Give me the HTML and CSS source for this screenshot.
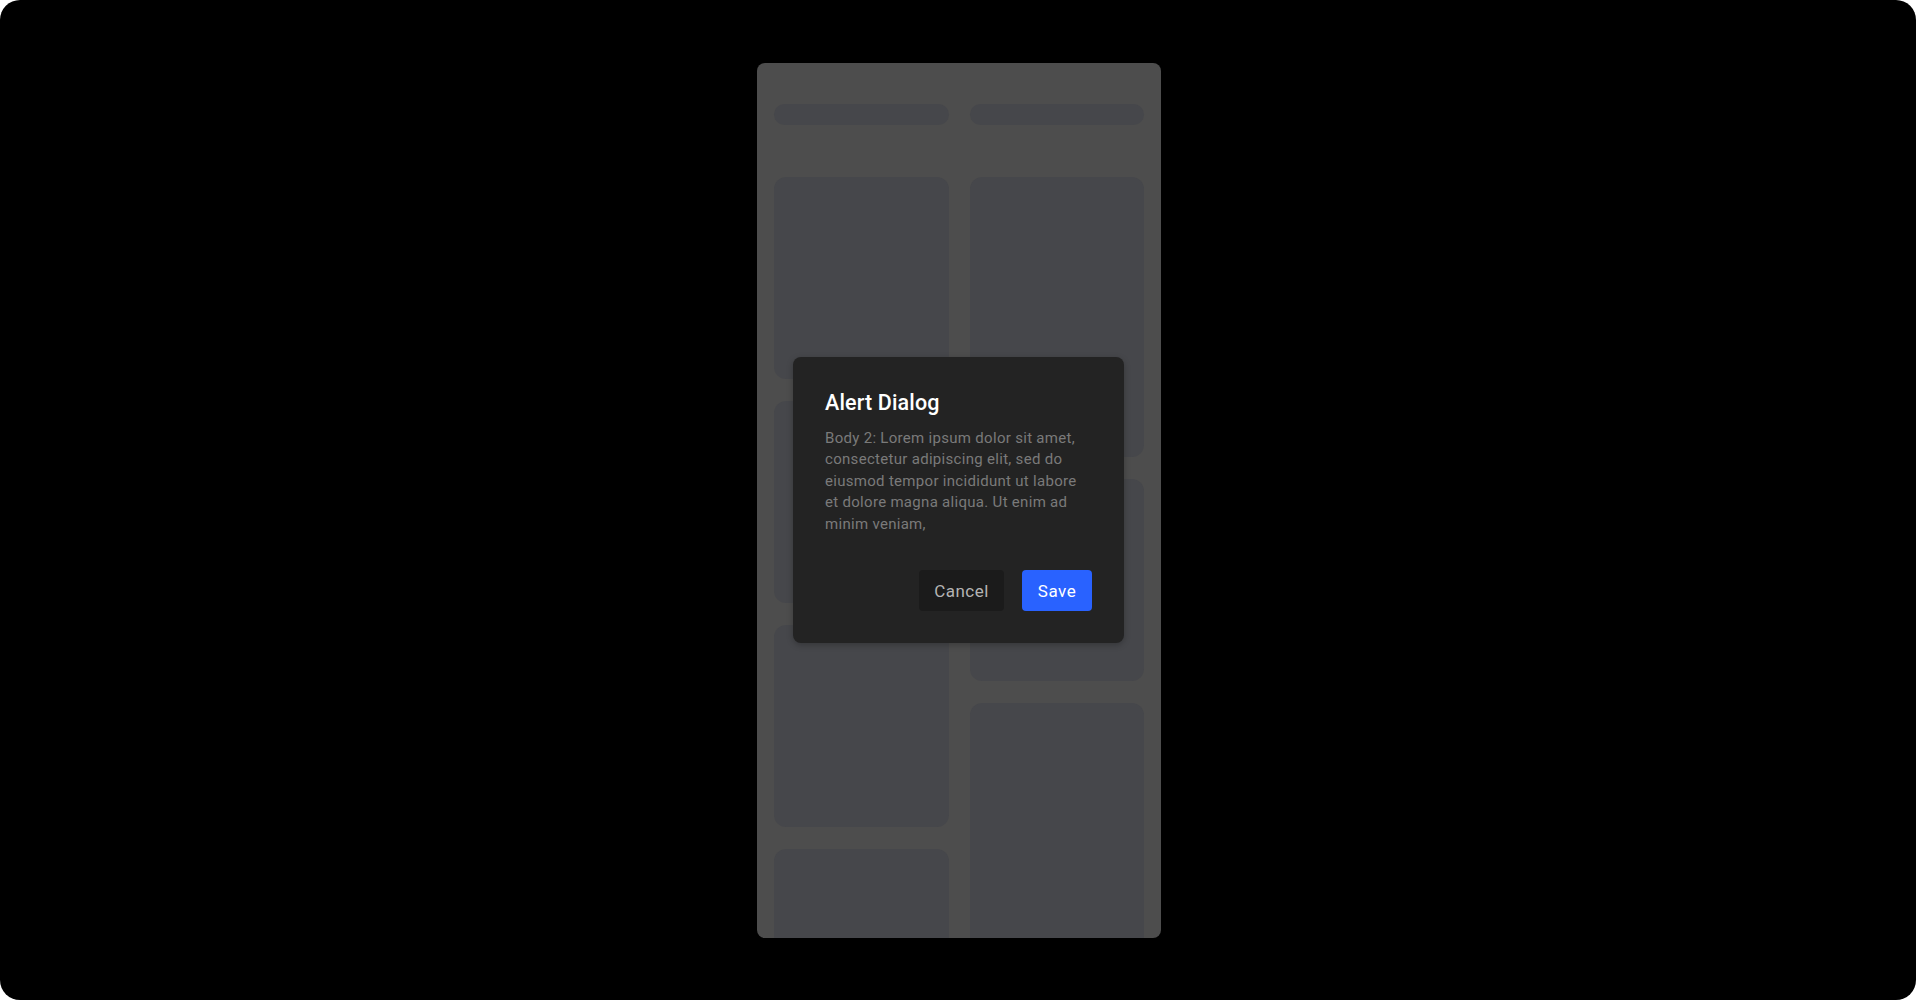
FILE: index.html
```html
<!DOCTYPE html>
<html lang="en">
<head>
<meta charset="utf-8">
<title>Alert Dialog</title>
<link rel="stylesheet" href="styles.css">
</head>
<body>
<div class="screen">
  <div class="phone">
    <div class="skeleton">
      <div class="col">
        <div class="pill"></div>
        <div class="card short"></div>
        <div class="card short"></div>
        <div class="card short"></div>
        <div class="card short"></div>
      </div>
      <div class="col">
        <div class="pill"></div>
        <div class="card tall"></div>
        <div class="card short"></div>
        <div class="card tall"></div>
      </div>
    </div>
    <div class="overlay">
      <div class="dialog">
        <h2 class="dialog-title">Alert Dialog</h2>
        <p class="dialog-body">Body 2: Lorem ipsum dolor sit amet, consectetur adipiscing elit, sed do eiusmod tempor incididunt ut labore et dolore magna aliqua. Ut enim ad minim veniam,</p>
        <div class="dialog-actions">
          <button class="btn btn-cancel">Cancel</button>
          <button class="btn btn-save">Save</button>
        </div>
      </div>
    </div>
  </div>
</div>
</body>
</html>
```

FILE: styles.css
```css
* { box-sizing: border-box; }
html, body { margin: 0; padding: 0; background: #ffffff; }
body { font-family: Roboto, "Liberation Sans", sans-serif; }

.screen {
  width: 1916px;
  height: 1000px;
  background: #000000;
  border-radius: 20px;
  display: flex;
  align-items: center;
  justify-content: center;
  overflow: hidden;
}

.phone {
  position: relative;
  width: 404px;
  height: 875px;
  margin-left: 2px;
  background: #4d4d4d;
  border-radius: 8px;
  overflow: hidden;
}

.skeleton {
  display: grid;
  grid-template-columns: 1fr 1fr;
  column-gap: 21px;
  padding: 41px 17px 0;
}

.col {
  display: flex;
  flex-direction: column;
  gap: 22px;
}

.pill {
  height: 21px;
  border-radius: 11px;
  background: #46474b;
  margin-bottom: 30px;
}

.card {
  background: #46474b;
  border-radius: 12px;
  flex: none;
}
.card.short { height: 202px; }
.card.tall { height: 280px; }

.overlay {
  position: absolute;
  inset: 0;
  display: flex;
  align-items: center;
  justify-content: center;
}

.dialog {
  width: 331px;
  margin-left: -1px;
  background: #232323;
  border-radius: 8px;
  padding: 33px 32px 32px;
  box-shadow: 0 2px 6px rgba(0, 0, 0, 0.25);
}

.dialog-title {
  margin: 0;
  font-size: 21.5px;
  font-weight: 500;
  line-height: 25px;
  color: #ffffff;
  letter-spacing: 0.15px;
}

.dialog-body {
  margin: 13px 0 0;
  max-width: 258px;
  font-size: 15px;
  line-height: 21.5px;
  letter-spacing: 0.3px;
  color: #7a7a7a;
}

.dialog-actions {
  display: flex;
  justify-content: flex-end;
  gap: 18px;
  margin-top: 35px;
}

.btn {
  height: 41px;
  border: none;
  border-radius: 4px;
  font-family: Roboto, "Liberation Sans", sans-serif;
  font-size: 17px;
  letter-spacing: 0.5px;
  padding: 0;
  cursor: pointer;
}

.btn-cancel {
  width: 85px;
  background: #1b1b1b;
  color: #b4b4b4;
}

.btn-save {
  width: 70px;
  background: #2962ff;
  color: #ffffff;
}
```
